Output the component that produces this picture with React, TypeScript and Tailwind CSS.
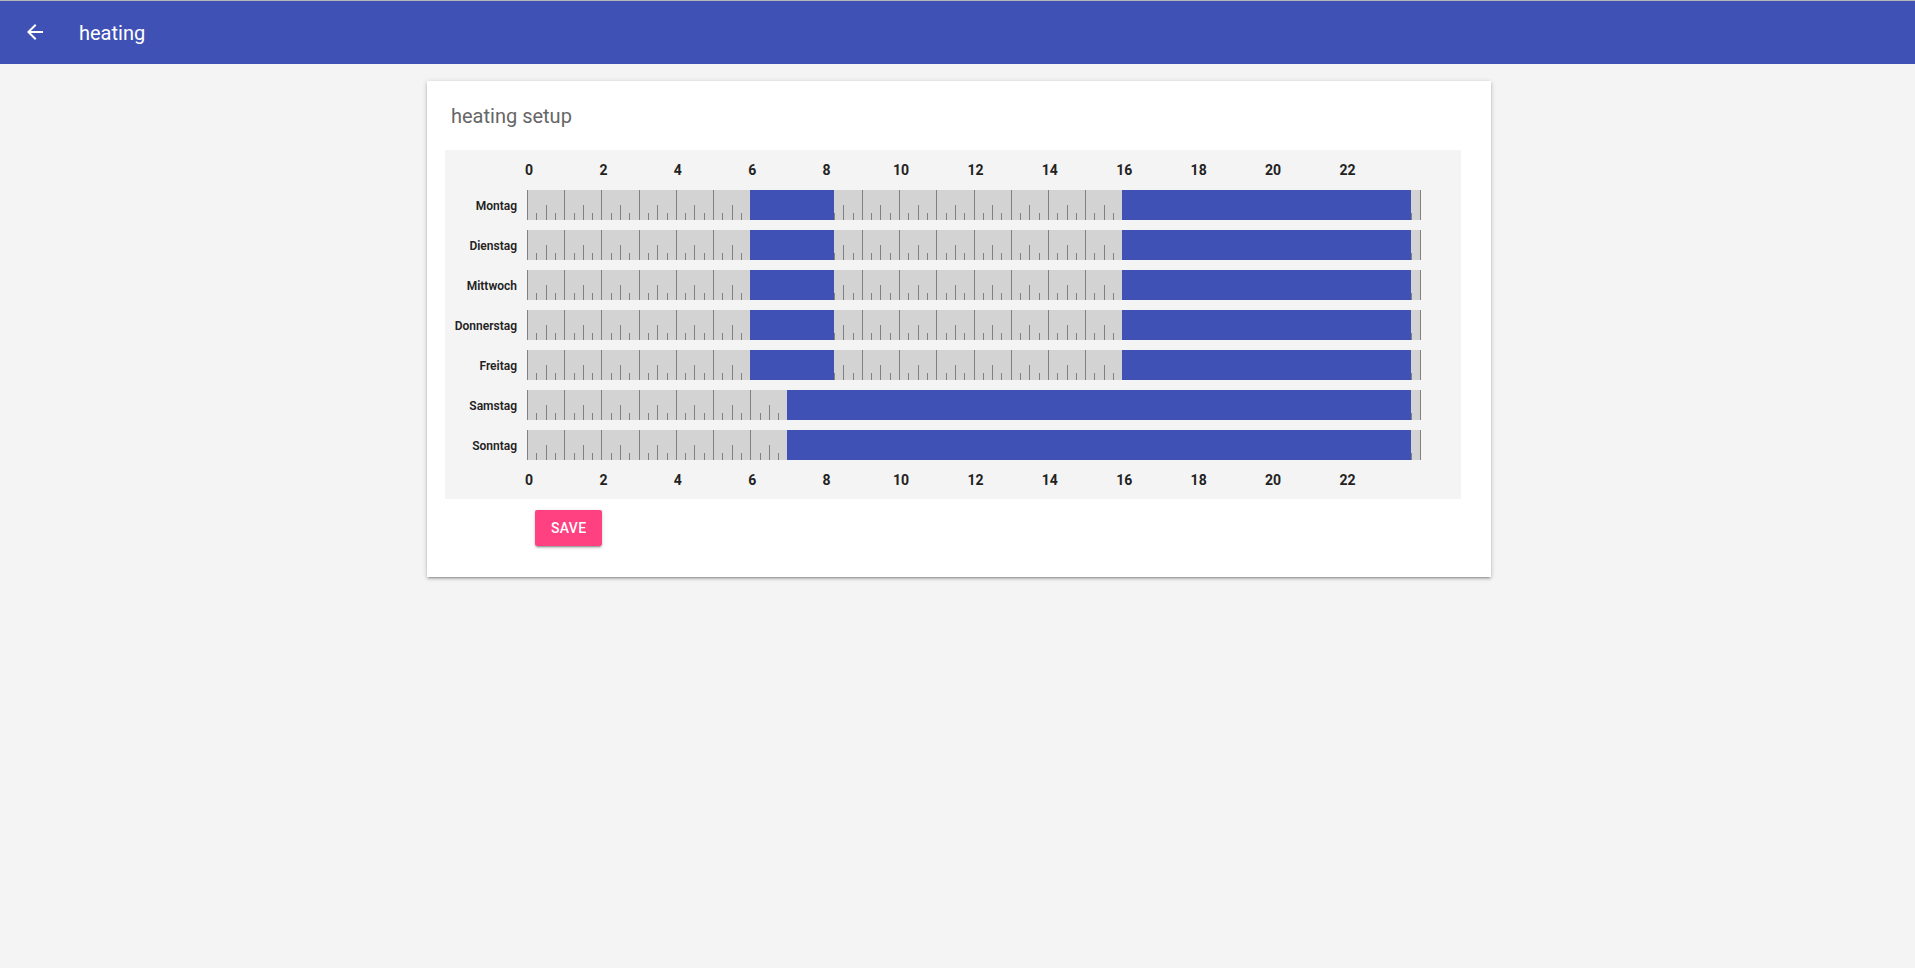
import React from "react";

const HOUR_W = 893 / 24;

interface DaySchedule {
  name: string;
  ranges: [number, number][];
}

const days: DaySchedule[] = [
  { name: "Montag", ranges: [[6, 8.25], [16, 23.75]] },
  { name: "Dienstag", ranges: [[6, 8.25], [16, 23.75]] },
  { name: "Mittwoch", ranges: [[6, 8.25], [16, 23.75]] },
  { name: "Donnerstag", ranges: [[6, 8.25], [16, 23.75]] },
  { name: "Freitag", ranges: [[6, 8.25], [16, 23.75]] },
  { name: "Samstag", ranges: [[7, 23.75]] },
  { name: "Sonntag", ranges: [[7, 23.75]] },
];

const labels = Array.from({ length: 12 }, (_, i) => i * 2);

function HourAxis() {
  return (
    <div className="flex ml-[84px] text-[14px] leading-4 font-bold text-[#222]">
      {labels.map((h) => (
        <div key={h} className="w-[74.4167px]">
          <span className="inline-block -translate-x-1/2">{h}</span>
        </div>
      ))}
    </div>
  );
}

function Ruler({ ranges }: { ranges: [number, number][] }) {
  const ticks: React.ReactNode[] = [];
  for (let h = 0; h < 24; h++) {
    const x = h * HOUR_W;
    ticks.push(<rect key={`m${h}`} x={Math.round(x)} y={0} width={1} height={30} fill="#808080" />);
    ticks.push(<rect key={`q${h}`} x={Math.round(x + HOUR_W * 0.25)} y={23} width={1} height={7} fill="#808080" />);
    ticks.push(<rect key={`h${h}`} x={Math.round(x + HOUR_W * 0.5)} y={15} width={1} height={15} fill="#808080" />);
    ticks.push(<rect key={`t${h}`} x={Math.round(x + HOUR_W * 0.75)} y={23} width={1} height={7} fill="#808080" />);
  }
  ticks.push(<rect key="end" x={893} y={0} width={1} height={30} fill="#808080" />);

  return (
    <svg width={894} height={30} viewBox="0 0 894 30" shapeRendering="crispEdges" className="block">
      <rect x={0} y={0} width={894} height={30} fill="#d3d3d3" />
      {ticks}
      {ranges.map(([s, e], i) => {
        const x1 = Math.round(s * HOUR_W);
        const x2 = Math.round(e * HOUR_W);
        return <rect key={i} x={x1} y={0} width={x2 - x1} height={30} fill="#3f51b5" />;
      })}
    </svg>
  );
}

export default function App() {
  return (
    <div className="min-h-screen bg-[#f4f4f4] font-['Roboto',sans-serif]">
      <div className="h-px bg-[#b5b5b5]" />
      <header className="h-[63px] bg-[#3f51b5] flex items-center text-white">
        <svg className="ml-[23px] w-6 h-6 -mt-[2px]" viewBox="0 0 24 24" fill="currentColor">
          <path d="M20 11H7.83l5.59-5.59L12 4l-8 8 8 8 1.41-1.41L7.83 13H20v-2z" />
        </svg>
        <h1 className="ml-[32px] text-[20px] leading-7 font-normal">heating</h1>
      </header>

      <main className="pt-[17px]">
        <div className="ml-[427px] w-[1064px] bg-white pl-[18px] pr-[30px] pt-[21px] pb-[31px] shadow-[0_2px_2px_0_rgba(0,0,0,0.14),0_3px_1px_-2px_rgba(0,0,0,0.12),0_1px_5px_0_rgba(0,0,0,0.2)]">
          <h2 className="pl-[6px] text-[20px] leading-7 font-normal text-[#666]">heating setup</h2>

          <div className="mt-[20px] bg-[#f4f4f4] pt-3 pb-[11px]">
            <HourAxis />
            <div className="mt-3 flex flex-col gap-[10px]">
              {days.map((d) => (
                <div key={d.name} className="flex items-center h-[30px]">
                  <div className="w-[82px] pr-[10px] pt-[2px] text-right text-[12px] font-semibold text-[#222]">
                    {d.name}
                  </div>
                  <Ruler ranges={d.ranges} />
                </div>
              ))}
            </div>
            <div className="mt-3">
              <HourAxis />
            </div>
          </div>

          <button className="mt-[11px] ml-[90px] h-9 px-4 rounded-[2px] bg-[#ff4081] text-white text-[14px] font-medium uppercase tracking-[0.3px] shadow-[0_3px_1px_-2px_rgba(0,0,0,0.2),0_2px_2px_0_rgba(0,0,0,0.14),0_1px_5px_0_rgba(0,0,0,0.12)]">
            Save
          </button>
        </div>
      </main>
    </div>
  );
}
